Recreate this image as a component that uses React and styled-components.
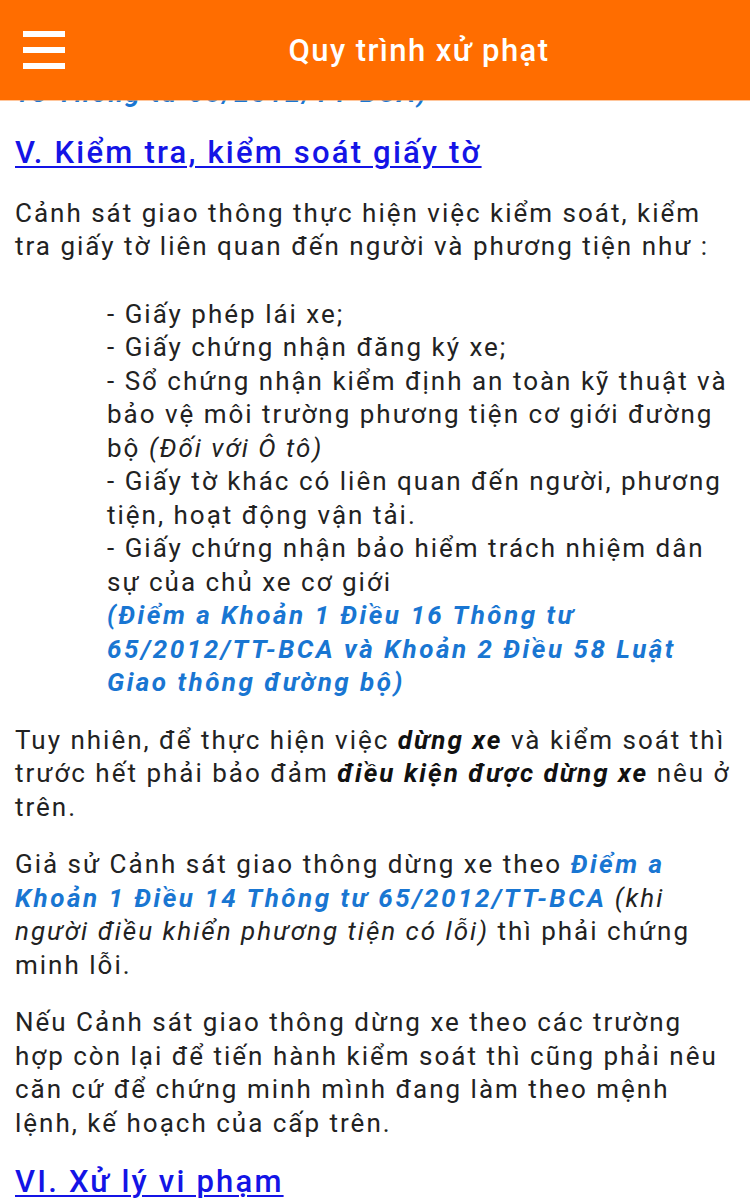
import React from 'react';
import styled, { createGlobalStyle } from 'styled-components';

const GlobalStyle = createGlobalStyle`
  html, body {
    margin: 0;
    padding: 0;
    background: #ffffff;
  }
  body {
    font-family: Roboto, "Noto Sans", sans-serif;
    -webkit-font-smoothing: antialiased;
  }
`;

const Page = styled.div`
  width: 750px;
  height: 1198px;
  overflow: hidden;
  position: relative;
  background: #fff;
`;

// app bar lies over the scrolled article
const Header = styled.header`
  position: absolute;
  top: 0;
  left: 0;
  right: 0;
  height: 100px;
  background: #ff6d00;
  display: flex;
  align-items: center;
  z-index: 2;
  box-shadow: 0 1px 0 rgba(255, 160, 90, 0.6);
`;

const MenuButton = styled.button`
  width: 88px;
  height: 100px;
  padding: 0 0 0 23px;
  border: none;
  background: transparent;
  display: flex;
  flex-direction: column;
  justify-content: center;
  gap: 10px;
  cursor: pointer;
`;

const Bar = styled.span`
  display: block;
  width: 42px;
  height: 6px;
  background: #fff;
`;

const Title = styled.h1`
  flex: 1;
  margin: 0;
  text-align: center;
  color: #fff;
  font-size: 31px;
  font-weight: 500;
  letter-spacing: 1.4px;
`;

const Content = styled.main`
  padding: 77px 15px 0 15px;
  color: #222;
  font-size: 26px;
  line-height: 33.5px;
  letter-spacing: 2px;
`;

const Heading = styled.h2`
  margin: 22px 0 0;
  font-size: 31px;
  line-height: 40px;
  font-weight: 500;
  letter-spacing: 2.2px;
  a {
    color: #1414e6;
    text-decoration: underline;
    text-decoration-thickness: 2px;
    text-underline-offset: 3px;
  }
`;

const Para = styled.p`
  margin: ${props => (props.first ? '0' : '24px')} 0 0;
`;

const List = styled.div`
  margin: 34px 0 0;
  padding-left: 92px;
`;

const Cite = styled.span`
  color: #1976d2;
  font-weight: 700;
  font-style: italic;
  letter-spacing: 2.5px;
`;

const Code = styled.span`
  white-space: nowrap;
`;

const Note = styled.em`
  font-style: italic;
`;

const Strong = styled.strong`
  font-weight: 700;
  font-style: italic;
  color: #111;
`;

export default function App() {
  return (
    <Page>
      <GlobalStyle />
      <Header>
        <MenuButton aria-label="menu">
          <Bar />
          <Bar />
          <Bar />
        </MenuButton>
        <Title>Quy trình xử phạt</Title>
      </Header>
      <Content>
        <Para first>
          <Cite>
            13 Thông tư <Code>65/2012/TT-BCA)</Code>
          </Cite>
        </Para>
        <Heading>
          <a href="#v">V. Kiểm tra, kiểm soát giấy tờ</a>
        </Heading>
        <Para>
          Cảnh sát giao thông thực hiện việc kiểm soát, kiểm tra giấy tờ liên
          quan đến người và phương tiện như :
        </Para>
        <List>
          - Giấy phép lái xe;
          <br />
          - Giấy chứng nhận đăng ký xe;
          <br />
          - Sổ chứng nhận kiểm định an toàn kỹ thuật và bảo vệ môi trường phương
          tiện cơ giới đường bộ <Note>(Đối với Ô tô)</Note>
          <br />
          - Giấy tờ khác có liên quan đến người, phương tiện, hoạt động vận tải.
          <br />
          - Giấy chứng nhận bảo hiểm trách nhiệm dân sự của chủ xe cơ giới
          <br />
          <Cite>
            (Điểm a Khoản 1 Điều 16 Thông tư <Code>65/2012/TT-BCA</Code> và
            Khoản 2 Điều 58 Luật Giao thông đường bộ)
          </Cite>
        </List>
        <Para>
          Tuy nhiên, để thực hiện việc <Strong>dừng xe</Strong> và kiểm soát thì
          trước hết phải bảo đảm <Strong>điều kiện được dừng xe</Strong> nêu ở
          trên.
        </Para>
        <Para>
          Giả sử Cảnh sát giao thông dừng xe theo{' '}
          <Cite>
            Điểm a Khoản 1 Điều 14 Thông tư <Code>65/2012/TT-BCA</Code>
          </Cite>{' '}
          <Note>(khi người điều khiển phương tiện có lỗi)</Note> thì phải chứng
          minh lỗi.
        </Para>
        <Para>
          Nếu Cảnh sát giao thông dừng xe theo các trường hợp còn lại để tiến
          hành kiểm soát thì cũng phải nêu căn cứ để chứng minh mình đang làm
          theo mệnh lệnh, kế hoạch của cấp trên.
        </Para>
        <Heading>
          <a href="#vi">VI. Xử lý vi phạm</a>
        </Heading>
      </Content>
    </Page>
  );
}
